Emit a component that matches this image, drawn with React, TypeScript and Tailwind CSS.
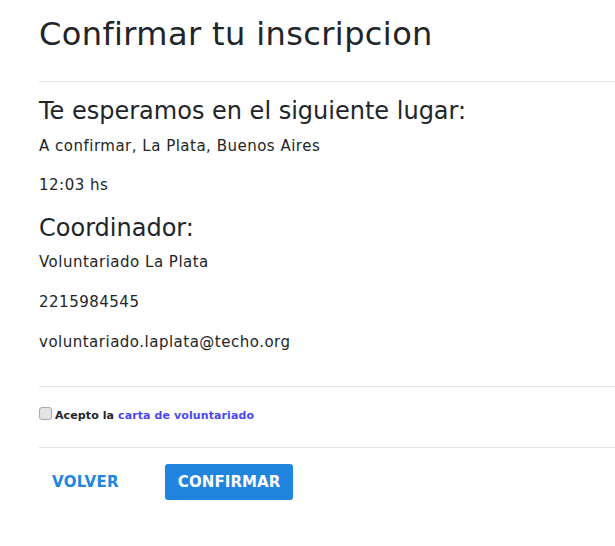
import React from "react";

export default function App() {
  return (
    <div className="min-h-[546px] bg-white pl-[39px] text-[#212529] font-['DejaVu_Sans',sans-serif] overflow-hidden">
      <h1 className="pt-[15px] text-[32px] leading-[38px] font-normal tracking-[0.4px] whitespace-nowrap">
        Confirmar tu inscripcion
      </h1>
      <hr className="mt-[28px] border-0 border-t border-[#e5e5e5]" />

      <h2 className="mt-[13px] text-[24px] leading-[32px] font-normal whitespace-nowrap">
        Te esperamos en el siguiente lugar:
      </h2>
      <p className="mt-[7px] text-[15px] leading-6 tracking-[0.5px]">A confirmar, La Plata, Buenos Aires</p>
      <p className="mt-[15px] text-[15px] leading-6 tracking-[0.5px]">12:03 hs</p>

      <h2 className="mt-[15px] text-[24px] leading-[32px] font-normal">Coordinador:</h2>
      <p className="mt-[6px] text-[15px] leading-6 tracking-[0.5px]">Voluntariado La Plata</p>
      <p className="mt-4 text-[15px] leading-6 tracking-[0.5px]">2215984545</p>
      <p className="mt-4 text-[15px] leading-6 tracking-[0.5px]">voluntariado.laplata@techo.org</p>

      <hr className="mt-[32px] border-0 border-t border-[#e5e5e5]" />

      <label className="mt-[18px] flex items-start">
        <input
          type="checkbox"
          className="mt-[2px] h-[13px] w-[13px] appearance-none rounded-[3px] border border-[#a9a9a9] bg-[#e4e4e4]"
        />
        <span className="ml-[3px] mt-[3px] text-[11px] leading-4 font-bold tracking-[0.1px] text-[#212529]">
          Acepto la <a className="text-[#4848f5]">carta de voluntariado</a>
        </span>
      </label>

      <hr className="mt-[23px] border-0 border-t border-[#e5e5e5]" />

      <div className="mt-[16px] flex gap-[33px]">
        <button className="h-[36px] rounded-[3px] px-[13px] text-[15px] font-bold leading-[36px] tracking-[0.3px] text-[#2185e0]">
          VOLVER
        </button>
        <button className="h-[36px] rounded-[3px] bg-[#2185e0] px-[13px] text-[15px] font-bold leading-[36px] tracking-[0.1px] text-white">
          CONFIRMAR
        </button>
      </div>
    </div>
  );
}
